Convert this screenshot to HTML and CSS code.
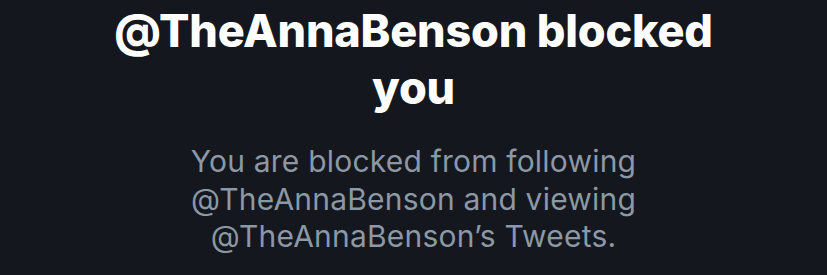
FILE: index.html
```html
<!DOCTYPE html>
<html lang="en">
<head>
  <meta charset="UTF-8" />
  <meta name="viewport" content="width=device-width, initial-scale=1.0"/>
  <title>Blocked</title>
  <link rel="stylesheet" href="styles.css">
</head>
<body>

<div class="blocked">
  <h1 class="blocked-title">@TheAnnaBenson blocked you</h1>
  <p class="blocked-text">You are blocked from following @TheAnnaBenson and viewing @TheAnnaBenson’s Tweets.</p>
</div>

</body>
</html>
```

FILE: styles.css
```css
* {
  margin: 0;
  padding: 0;
  box-sizing: border-box;
}

body {
  font-family: Inter, 'Liberation Sans', sans-serif;
  background: #14171d;
  color: white;
  height: 100vh;
  overflow: hidden;
}

.blocked {
  display: flex;
  flex-direction: column;
  align-items: center;
  text-align: center;
  padding-top: 2px;
}

.blocked-title {
  max-width: 640px;
  font-size: 45px;
  font-weight: 800;
  line-height: 57px;
  letter-spacing: -0.2px;
  color: #ffffff;
}

.blocked-text {
  max-width: 490px;
  margin-top: 27px;
  font-size: 30px;
  line-height: 37.5px;
  letter-spacing: 0.2px;
  color: #8b98a5;
}
```
